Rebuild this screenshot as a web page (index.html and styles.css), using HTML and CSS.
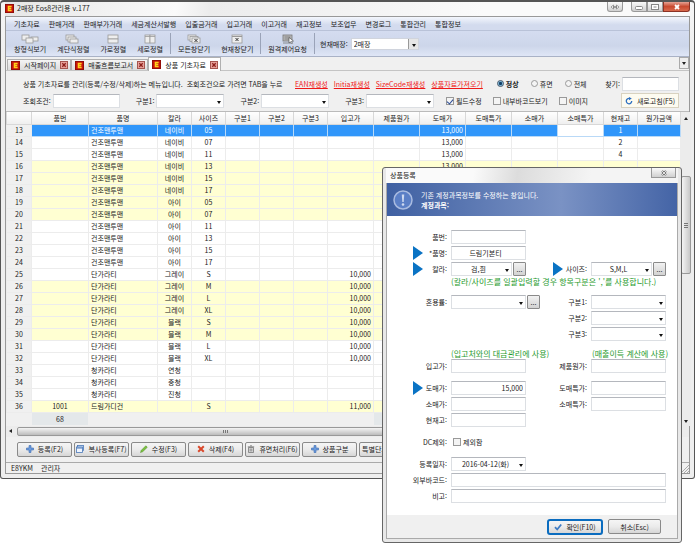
FILE: index.html
```html
<!DOCTYPE html>
<html lang="ko">
<head>
<meta charset="utf-8">
<title>2매장 Eos8관리용 v.177</title>
<link rel="stylesheet" href="styles.css">
</head>
<body>
<svg class="defs" aria-hidden="true">
  <symbol id="logo" viewBox="0 0 10 10"><rect width="10" height="10" fill="#c8140c"/><rect x=".5" y=".5" width="9" height="9" fill="none" stroke="#8e0d08"/><path d="M3 2h4.400v1.600H4.800v.7h2.200v1.400H4.800v.7h2.600V8H3z" fill="#ffd21c"/></symbol>
  <symbol id="tabclose" viewBox="0 0 8 8"><rect x=".5" y=".5" width="7" height="7" fill="#e9a29c" stroke="#a5554f"/><path d="M2.300 2.300l3.400 3.400M5.700 2.300L2.300 5.700" stroke="#8c1f1a" stroke-width="1.300"/></symbol>
  <symbol id="plus" viewBox="0 0 8 8"><path d="M3 .5h2V3h2.500v2H5v2.500H3V5H.5V3H3z" fill="#6b9bdc" stroke="#3c6cb4" stroke-width=".6"/></symbol>
</svg>

<main class="window">
  <header class="titlebar">
    <svg class="logo"><use href="#logo"/></svg>
    <h1>2매장 Eos8관리용 v.177</h1>
    <div class="caption-buttons">
      <button class="cap swap" aria-label="전환"><svg viewBox="0 0 10 6"><path d="M3.500 1L1 3l2.500 2zM6.500 1L9 3 6.500 5zM3.500 2.500h3v1h-3z" fill="#fff" stroke="#777" stroke-width=".7"/></svg></button>
      <button class="cap first" aria-label="최소화"><svg viewBox="0 0 10 6"><rect x="1.500" y="2.500" width="7" height="3" rx="1" fill="#fff" stroke="#888"/></svg></button>
      <button class="cap" aria-label="최대화"><svg viewBox="0 0 10 6"><rect x="1.500" y=".5" width="7" height="5" fill="#fff" stroke="#888"/><path d="M3.500 2.500h3v1h-3z" fill="#888"/></svg></button>
      <button class="cap close" aria-label="닫기"><svg viewBox="0 0 10 6"><path d="M3 1l4 4M7 1L3 5" stroke="#fff" stroke-width="1.800"/></svg></button>
    </div>
  </header>

  <div class="client">
    <nav class="menubar">
      <a href="#">기초자료</a><a href="#">판매거래</a><a href="#">판매부가거래</a><a href="#">세금계산서발행</a><a href="#">입출금거래</a><a href="#">입고거래</a><a href="#">이고거래</a><a href="#">재고정보</a><a href="#">보조업무</a><a href="#">변경로그</a><a href="#">통합관리</a><a href="#">통합정보</a>
    </nav>

    <div class="toolbar">
      <button class="tool"><svg viewBox="0 0 18 10"><g fill="#eee" stroke="#999" stroke-width=".8"><rect x="1" y="1" width="7" height="5"/><rect x="10" y="3" width="7" height="4"/><rect x="5" y="4" width="7" height="5"/></g></svg>창형식보기</button>
      <button class="tool"><svg viewBox="0 0 18 10"><g fill="#eee" stroke="#999" stroke-width=".8"><rect x="2" y="1" width="8" height="5"/><rect x="4" y="3" width="8" height="5"/><rect x="6" y="5" width="8" height="4"/></g></svg>계단식정렬</button>
      <button class="tool"><svg viewBox="0 0 18 10"><g fill="#eee" stroke="#999" stroke-width=".8"><rect x="4" y="1" width="10" height="4"/><rect x="4" y="5" width="10" height="4"/></g></svg>가로정렬</button>
      <button class="tool"><svg viewBox="0 0 18 10"><g fill="#eee" stroke="#999" stroke-width=".8"><rect x="4" y="1" width="5" height="8"/><rect x="9" y="1" width="5" height="8"/><path d="M4 2.500h10"/></g></svg>세로정렬</button>
      <span class="sep"></span>
      <button class="tool"><svg viewBox="0 0 18 10"><g fill="#eee" stroke="#999" stroke-width=".8"><rect x="3" y="1" width="8" height="5"/><rect x="5" y="2.500" width="8" height="5"/><rect x="7" y="4" width="8" height="5"/></g><path d="M9.500 5l3 3M12.500 5l-3 3" stroke="#333"/></svg>모든창닫기</button>
      <button class="tool"><svg viewBox="0 0 18 10"><rect x="4" y="1" width="10" height="8" fill="#eee" stroke="#999" stroke-width=".8"/><path d="M4 2.500h10" stroke="#999"/><path d="M7.500 4l3 3M10.500 4l-3 3" stroke="#333"/></svg>현재창닫기</button>
      <span class="sep"></span>
      <button class="tool"><svg viewBox="0 0 18 10"><rect x="4" y="1" width="9" height="6" fill="#bbb" stroke="#777" stroke-width=".8"/><path d="M5.500 3h6M5.500 5h6M4 9h8" stroke="#777" stroke-width=".8"/><path d="M10 3.500l4.500 3.500-2 .3 1 2-1 .4-1-1.900L10 9z" fill="#fff" stroke="#444" stroke-width=".6"/></svg>원격제어요청</button>
      <span class="sep"></span>
      <label class="store">현재매장: <span class="combo boxed"><select><option>2매장</option></select></span></label>
    </div>

    <div class="tabs">
      <div class="tab"><svg class="logo"><use href="#logo"/></svg>시작페이지<button aria-label="탭 닫기"><svg><use href="#tabclose"/></svg></button></div>
      <div class="tab"><svg class="logo"><use href="#logo"/></svg>매출흐름보고서<button aria-label="탭 닫기"><svg><use href="#tabclose"/></svg></button></div>
      <div class="tab active"><svg class="logo"><use href="#logo"/></svg>상품 기초자료<button aria-label="탭 닫기"><svg><use href="#tabclose"/></svg></button></div>
      <button class="tab-list" aria-label="탭 목록"><i class="down"></i></button>
    </div>

    <section class="filters">
      <div class="frow">
        <p>상품 기초자료를 관리(등록/수정/삭제)하는 메뉴입니다.&nbsp; 조회조건으로 가려면 TAB을 누르</p>
        <div class="links"><a href="#">EAN재생성</a><a href="#">Initia재생성</a><a href="#">SizeCode재생성</a><a href="#">상품자료가져오기</a></div>
        <div class="radios">
          <label class="on"><input type="radio" name="state" checked>정상</label>
          <label><input type="radio" name="state">휴면</label>
          <label><input type="radio" name="state">전체</label>
        </div>
        <label class="find">찾기:<input type="text" class="field"></label>
      </div>
      <div class="frow">
        <label class="cond">조회조건:<input type="text" class="field"></label>
        <label>구분1:<span class="combo"><select><option></option></select></span></label>
        <label>구분2:<span class="combo"><select><option></option></select></span></label>
        <label>구분3:<span class="combo"><select><option></option></select></span></label>
        <div class="checks">
          <label><input type="checkbox" checked>필드수정</label>
          <label><input type="checkbox">내부바코드보기</label>
          <label><input type="checkbox">이미지</label>
        </div>
        <button class="refresh"><svg viewBox="0 0 8 8"><path d="M4.300 1.400A2.700 2.700 0 1 0 6.700 4" fill="none" stroke="#2d6fc0" stroke-width="1.300"/><path d="M4 0l2.800 1.500L4 3.200z" fill="#2d6fc0"/></svg>새로고침(F5)</button>
      </div>
    </section>

    <div class="sheet">
      <table>
        <colgroup><col class="c-no"><col class="c-code"><col class="c-name"><col class="c-s"><col class="c-s"><col class="c-s"><col class="c-s"><col class="c-s"><col class="c-m"><col class="c-m"><col class="c-m"><col class="c-m"><col class="c-m"><col class="c-m"><col class="c-s"><col class="c-l"></colgroup>
        <thead><tr><th></th><th>품번</th><th>품명</th><th>칼라</th><th>사이즈</th><th>구분1</th><th>구분2</th><th>구분3</th><th>입고가</th><th>제품원가</th><th>도매가</th><th>도매특가</th><th>소매가</th><th>소매특가</th><th>현재고</th><th>원가금액</th></tr></thead>
        <tbody id="rows"></tbody>
        <tfoot><tr><td></td><td class="sum">68</td><td colspan="7"></td><td class="sum"></td><td colspan="6"></td></tr></tfoot>
      </table>
      <div class="vscroll"><i class="up"></i><span class="vthumb"></span><i class="down"></i></div>
    </div>
    <div class="hscroll"><i class="left"></i><span class="hthumb"></span></div>

    <div class="actions">
      <button><svg viewBox="0 0 8 8"><use href="#plus"/></svg>등록(F2)</button>
      <button><svg viewBox="0 0 8 8"><rect x="1.500" y=".5" width="6" height="5" fill="#dbe8fa" stroke="#4a78b8" stroke-width=".8"/><rect x=".5" y="2" width="6" height="5.500" fill="#eef4fd" stroke="#4a78b8" stroke-width=".8"/><path d="M.5 3h6" stroke="#4a78b8"/></svg>복사등록(F7)</button>
      <button><svg viewBox="0 0 8 8"><path d="M.5 7.500l.8-2.200L5.800.8l1.500 1.500L2.700 6.700z" fill="#7cc142" stroke="#4c8a20" stroke-width=".5"/></svg>수정(F3)</button>
      <button><svg viewBox="0 0 8 8"><path d="M1.200 1.200l5.600 5.600M6.800 1.200L1.200 6.800" stroke="#d9482b" stroke-width="2"/></svg>삭제(F4)</button>
      <button><svg viewBox="0 0 8 8"><path d="M1.500 2.500h5v5h-5zM.8 1.800h6.400M3 .8h2M3.200 3.500v3M4.800 3.500v3" fill="#ddd" stroke="#777" stroke-width=".8"/></svg>휴면처리(F6)</button>
      <button><svg viewBox="0 0 8 8"><use href="#plus"/></svg>상품구분</button>
      <button class="plain">특별단가관리</button>
    </div>
    <footer class="status"><span>E8YKM</span><span>관리자</span><svg viewBox="0 0 8 8"><path d="M0 8l8-8M3 8l5-5M6 8l2-2" stroke="#aaa"/></svg></footer>
  </div>
</main>

<div class="dialog" role="dialog" aria-labelledby="dlg-title">
  <div class="dlg-title"><h2 id="dlg-title">상품등록</h2><button class="cap" aria-label="닫기"><svg viewBox="0 0 10 6"><path d="M3 1l4 4M7 1L3 5" stroke="#666" stroke-width="2"/><path d="M3 1l4 4M7 1L3 5" stroke="#fff" stroke-width=".8"/></svg></button></div>
  <div class="dlg-body">
    <div class="banner">
      <svg viewBox="0 0 20 20"><circle cx="10" cy="10" r="9" fill="#5b7fc6" stroke="#a9bbe0" stroke-width="1.500"/><path d="M8.800 4.500h2.400l-.5 7.500H9.300z" fill="#cfdaf0"/><circle cx="10" cy="14.500" r="1.300" fill="#cfdaf0"/></svg>
      <p>기존 계정과목정보를 수정하는 창입니다.<br><b>계정과목:</b></p>
    </div>
    <form class="form">
      <div class="group">
        <label for="f1"><span>품번:</span></label><input id="f1" type="text" class="field">
        <label for="f2" class="req"><i></i><span>*품명:</span></label><input id="f2" type="text" class="field mid" value="드림기본티">
        <label for="f3" class="req"><i></i><span>칼라:</span></label>
        <div class="pick"><span class="combo"><select id="f3"><option>검,흰</option></select></span><button type="button" class="more">...</button></div>
        <label for="f4" class="req"><i></i><span>사이즈:</span></label>
        <div class="pick"><span class="combo"><select id="f4"><option>S,M,L</option></select></span><button type="button" class="more">...</button></div>
      </div>
      <p class="note tight"><span>(칼라/사이즈를 일괄입력할 경우 항목구분은 ','를 사용합니다.)</span></p>
      <div class="group">
        <label for="f5"><span>혼용률:</span></label><span class="combo"><select id="f5"><option></option></select></span>
        <div class="between"><button type="button" class="more">...</button><label for="f6">구분1:</label></div><span class="combo"><select id="f6"><option></option></select></span>
        <label for="f7" class="right"><span>구분2:</span></label><span class="combo"><select id="f7"><option></option></select></span>
        <label for="f8" class="right"><span>구분3:</span></label><span class="combo"><select id="f8"><option></option></select></span>
      </div>
      <p class="note"><span>(입고처와의 대금관리에 사용)</span><span>(매출이득 계산에 사용)</span></p>
      <div class="group flush">
        <label for="f9"><span>입고가:</span></label><input id="f9" type="text" class="field"><label for="f10"><span>제품원가:</span></label><input id="f10" type="text" class="field">
      </div>
      <div class="group">
        <label for="f11" class="req"><i></i><span>도매가:</span></label><input id="f11" type="text" class="field num" value="15,000"><label for="f12"><span>도매특가:</span></label><input id="f12" type="text" class="field">
        <label for="f13"><span>소매가:</span></label><input id="f13" type="text" class="field"><label for="f14"><span>소매특가:</span></label><input id="f14" type="text" class="field">
        <label for="f15"><span>현재고:</span></label><input id="f15" type="text" class="field">
      </div>
      <div class="group">
        <label for="f16"><span>DC제외:</span></label><label class="check"><input id="f16" type="checkbox">제외함</label>
      </div>
      <div class="group">
        <label for="f17"><span>등록일자:</span></label><span class="combo"><select id="f17"><option>2016-04-12(화)</option></select></span>
        <label for="f18" class="start"><span>외부바코드:</span></label><input id="f18" type="text" class="field wide">
        <label for="f19"><span>비고:</span></label><input id="f19" type="text" class="field wide">
      </div>
    </form>
    <div class="dlg-actions">
      <button class="ok"><svg viewBox="0 0 8 8"><path d="M1 4.200l2.200 2.300L7.200 1.500" fill="none" stroke="#3f7cc4" stroke-width="1.800"/></svg>확인(F10)</button>
      <button class="cancel">취소(Esc)</button>
    </div>
  </div>
</div>
<script src="rows.js"></script>
</body>
</html>
```
FILE: styles.css
```css
* { box-sizing: border-box; }
body { margin: 0; background: #fff; }
body, button, input, select {
  font-family: "Noto Sans CJK KR", "Noto Sans", sans-serif;
  font-size: 7px;
  line-height: 10px;
  color: #222;
}
button, input, select { margin: 0; padding: 0; }
h1, h2, p { margin: 0; font-size: 7px; font-weight: 400; }
a { color: inherit; text-decoration: none; }
label, button, a, th, td, h1, p { white-space: nowrap; }
.defs { position: absolute; width: 0; height: 0; }

.window {
  border: 1px solid #555;
  border-top-width: 2px;
  border-radius: 4px 4px 3px 3px;
  padding: 0 4px 4px;
  background: linear-gradient(#f6f6f6, #eee 60px);
}
.titlebar { display: flex; height: 14px; gap: 3px; background: linear-gradient(100deg, #e6e6e6, #fafafa 25%, #ececec 30%, #fafafa 70%); }
.titlebar h1 { line-height: 13px; }
.logo { width: 9px; height: 9px; margin-top: 2px; }
.caption-buttons { display: flex; margin-left: auto; }
.cap { width: 16px; height: 10px; border: 1px solid #999; border-top: 0; background: linear-gradient(#fafafa, #d0d0d0); display: grid; place-items: center; }
.cap svg { width: 10px; height: 6px; }
.swap { margin-right: 8px; border-radius: 0 0 3px 3px; }
.first { border-radius: 0 0 0 3px; }
.close { width: 27px; border-color: #8c3326; border-radius: 0 0 3px 0; background: linear-gradient(#e6a294, #c94a30 50%, #d8694c); }

.client { border: 1px solid #999; background: #f0f0f0; }
.menubar { display: flex; gap: 9px; height: 14px; padding: 0 8px; line-height: 14px; background: linear-gradient(#f4f7fd, #d3dbee 60%); border-bottom: 1px solid #b9c2d8; }
.toolbar { display: flex; align-items: center; gap: 7px; height: 26px; padding: 0 6px; background: linear-gradient(#d4dcf0, #cdd6ea 60%, #dfe6f6); border-bottom: 1px solid #a9b2c6; }
.tool { display: grid; justify-items: center; padding: 0 2px; border: 0; background: none; }
.tool svg { width: 18px; height: 10px; }
.sep { width: 1px; height: 21px; margin: 0 -2px; background: #9aa3b8; }
.store { display: flex; align-items: center; gap: 3px; }
.store .combo { width: 68px; height: 12px; }

.combo { position: relative; display: block; height: 14px; }
.combo select, .field {
  width: 100%; height: 100%; border: 1px solid #dcdfe3; border-top-color: #b4b7bd; border-radius: 0; background: #fff;
  appearance: none; outline: 0; padding: 0 2px;
}
.combo::after { content: ""; position: absolute; right: 3px; top: 50%; border: 2px solid transparent; border-top: 3px solid #111; border-bottom: 0; pointer-events: none; }
.combo.boxed select { background: linear-gradient(90deg, #999 1px, #e6e6e6 1px) right / 10px 100% no-repeat #fff; border-color: #d0d4dd; }

.up, .down, .left { width: 0; height: 0; border: 2px solid transparent; }
.down { border-top: 3px solid #222; border-bottom: 0; }
.up { border-bottom: 3px solid #222; border-top: 0; }
.left { border-right: 3px solid #222; border-left: 0; }

.tabs { display: flex; align-items: flex-end; height: 14px; padding-left: 1px; border-bottom: 1px solid #c4c4c4; background: #f0f0f0; }
.tab { display: flex; align-items: center; gap: 4px; height: 11px; padding: 0 2px 0 3px; border: 1px solid #b0b0b0; border-bottom: 0; background: linear-gradient(#f5f5f5, #dcdcdc); }
.tab.active { height: 14px; margin-bottom: -1px; background: #fff; }
.tab .logo { margin: 0; }
.tab button { border: 0; background: none; width: 8px; height: 8px; line-height: 0; }
.tab button svg { width: 8px; height: 8px; }
.tab-list { align-self: flex-start; margin-left: auto; width: 10px; height: 12px; border: 1px solid #aaa; background: #eee; display: grid; place-items: center; }

.filters { display: grid; gap: 2px; padding: 5px 10px 3px 17px; }
.frow { display: flex; align-items: center; height: 15px; }
.frow label { display: flex; align-items: center; gap: 2px; }
.frow p { width: 272px; overflow: hidden; }
.links { display: flex; gap: 6px; color: #f01818; }
.links a { text-decoration: underline; }
.radios { display: flex; gap: 12px; margin-left: 14px; }
.on { font-weight: 700; }
.field { height: 14px; }
.find { margin-left: auto; }
.find .field { width: 57px; }
.cond .field { width: 67px; }
.frow .combo { width: 68px; }
.frow > label + label { margin-left: 16px; }
.checks { display: flex; gap: 11px; margin-left: 12px; }
input[type="radio"], input[type="checkbox"] { width: 8px; height: 8px; appearance: none; border: 1px solid #999; background: #f4f4f4; }
input[type="radio"] { width: 7px; height: 7px; border-radius: 50%; }
input[type="radio"]:checked { background: radial-gradient(#123f66 0 35%, #8cc4e4 60%); border-color: #456; }
input[type="checkbox"]:checked { display: grid; justify-items: center; }
input[type="checkbox"]:checked::before { content: ""; width: 3px; height: 5px; border: solid #2a4b94; border-width: 0 1px 1px 0; transform: rotate(40deg); }
.refresh { display: flex; align-items: center; justify-content: center; gap: 4px; margin-left: auto; width: 58px; height: 15px; border: 1px solid #d8d2c0; background: #fdfbf0; }
.refresh svg, .actions svg, .ok svg { width: 8px; height: 8px; }

.sheet { display: grid; grid-template-columns: 1fr 10px; border-top: 1px solid #bbb; }
table { width: 100%; table-layout: fixed; border-collapse: collapse; background: #fff; }
.c-no { width: 25px; } .c-code { width: 57px; } .c-name { width: 69px; }
.c-s { width: 34px; } .c-m { width: 46px; } .c-l { width: 43px; }
th, td { height: 12px; padding: 0 2px; line-height: 10px; font-weight: 400; text-align: center; overflow: hidden; border: 1px solid #ececec; }
thead th { background: linear-gradient(#fff, #efefef); border-color: #d8d8d8; border-top: 0; }
tbody th { background: #f0f0f0; }
.name { text-align: left; }
.num { text-align: right; }
.alt td { background: #ffffd2; }
.sel td { background: #3096fa; color: #fff; border-color: #b9d9f7; }
.sel td.edit { background: #fff; }
tfoot td { height: 13px; background: #f0f0f0; border-color: #f0f0f0; border-top: 1px solid #999; }
tfoot .sum { background: #e4e8ea; border-left-color: #aaa; }
.vscroll { display: flex; flex-direction: column; align-items: center; justify-content: space-between; padding: 5px 0 3px; background: #ececec; }
.vthumb { width: 10px; height: 98px; margin-bottom: 89px; border: 1px solid #999; border-radius: 2px; background: repeating-linear-gradient(#777 0 1px, transparent 1px 2px) center / 4px 5px no-repeat, linear-gradient(90deg, #f4f4f4, #c8c8c8); }
.hscroll { display: flex; align-items: center; gap: 5px; height: 11px; padding: 0 90px 0 3px; background: #ececec; }
.hthumb { flex: 1; height: 9px; border: 1px solid #999; border-radius: 2px; background: repeating-linear-gradient(90deg, #777 0 1px, transparent 1px 2px) 205px center / 5px 3px no-repeat, linear-gradient(#f4f4f4, #bcbcbc); }

.actions { display: flex; gap: 2px; padding: 5px 11px; }
.actions button, .cancel, .ok { display: flex; align-items: center; justify-content: center; gap: 4px; width: 55px; height: 15px; border: 1px solid #8a8a8a; border-radius: 2px; background: linear-gradient(#f5f5f5, #ebebeb 50%, #d6d6d6); }
.actions .plain { justify-content: flex-start; padding-left: 2px; }
.status { display: flex; gap: 8px; height: 11px; padding-left: 5px; border-top: 1px solid #aaa; }
.status svg { width: 8px; height: 8px; margin: 2px 0 0 auto; }

.dialog { position: absolute; top: 167px; right: 13px; width: 300px; padding: 0 3px 3px; border: 1px solid #666; border-radius: 3px; background: #e8e8e8; }
.dlg-title { display: flex; justify-content: space-between; height: 15px; padding: 0 2px 0 4px; background: linear-gradient(100deg, #fafafa 30%, #dcdcdc 45%, #f4f4f4 70%); }
.dlg-title h2 { line-height: 15px; }
.dlg-title .cap { width: 25px; }
.dlg-body { border: 1px solid #aaa; border-top: 0; background: #fff; }
.banner { display: flex; align-items: center; gap: 8px; height: 33px; padding: 0 6px; color: #fff; background: linear-gradient(90deg, #3f60a2, #7a92c4 60%, #4464a6); }
.banner svg { width: 20px; height: 20px; }
.form { padding: 14px 11px 12px 0; }
.group { display: grid; grid-template-columns: 60px 75px 1fr 75px; grid-auto-rows: 14px; gap: 2px 4px; margin-top: 8px; }
.group:first-child, .group.flush { margin-top: 0; }
.group label { display: flex; align-items: center; justify-content: flex-end; gap: 2px; }
.group > label:nth-child(1), .group > label[for="f2"], .group > label[for="f3"], .group > label[for="f13"], .group > label[for="f15"], .group > .start, .group > label[for="f19"] { grid-column: 1; }
.group > .right { grid-column: 3; }
.group .wide { grid-column: 2 / -1; }
.group .check { justify-content: flex-start; margin-left: 2px; }
.req span { min-width: 22px; text-align: right; }
.req i { border: 7px solid transparent; border-left: 10px solid #0a73c4; border-right: 0; }
.mid, .group select { text-align: center; text-align-last: center; padding-right: 8px; }
.pick { display: grid; grid-template-columns: 1fr 13px; gap: 1px; }
.more { width: 13px; height: 14px; border: 1px solid #8a8a8a; border-radius: 1px; background: linear-gradient(#f2f2f2, #d2d2d2); line-height: 8px; }
.between { display: flex; justify-content: space-between; margin-left: -3px; }
.note { display: grid; grid-template-columns: 137px 1fr; margin: 8px 0 0 64px; height: 10px; font-size: 8px; color: #1f9a2d; }
.note span:nth-child(2) { padding-left: 4px; }
.tight { display: block; margin-top: 1px; }
.dlg-actions { display: flex; justify-content: flex-end; align-items: center; gap: 5px; height: 23px; padding-right: 16px; background: #f0f0f0; }
.ok { width: 56px; height: 16px; border: 2px solid #0a6cbf; border-radius: 3px; }
.cancel { width: 53px; }
```
FILE: rows.js
```js
const knit = [
  ["네이비", "05"], ["네이비", "07"], ["네이비", "11"], ["네이비", "13"], ["네이비", "15"], ["네이비", "17"],
  ["아이", "05"], ["아이", "07"], ["아이", "11"], ["아이", "13"], ["아이", "15"], ["아이", "17"],
].map(([color, size], i) => ({ name: "건조맨투맨", color, size, sale: i < 4 ? "13,000" : "" }));
const tee = ["그레이", "블랙"].flatMap((color) =>
  ["S", "M", "L", "XL"].map((size) => ({ name: "단가라티", color, size, cost: "10,000" })));
const collar = ["연청", "중청", "진청"].map((color) => ({ name: "청카라티", color }));
const items = [...knit, ...tee, ...collar, { code: "1001", name: "드림가디건", size: "S", cost: "11,000" }];
Object.assign(items[0], { stock: "1" });
Object.assign(items[1], { stock: "2" });
Object.assign(items[2], { stock: "4" });

const columns = ["code", "name", "color", "size", "", "", "", "cost", "", "sale", "", "", "edit", "stock", ""];
const body = document.getElementById("rows");
items.forEach((item, i) => {
  const no = i + 13;
  const tr = body.insertRow();
  if (no === 13) tr.className = "sel";
  else if (Math.floor((no - 1) / 5) % 2 === 1) tr.className = "alt";
  const th = document.createElement("th");
  th.scope = "row";
  th.textContent = no;
  tr.append(th);
  columns.forEach((key) => {
    const td = tr.insertCell();
    td.textContent = item[key] || "";
    if (key === "cost" || key === "sale") td.className = "num";
    else if (key) td.className = key;
  });
});
```
